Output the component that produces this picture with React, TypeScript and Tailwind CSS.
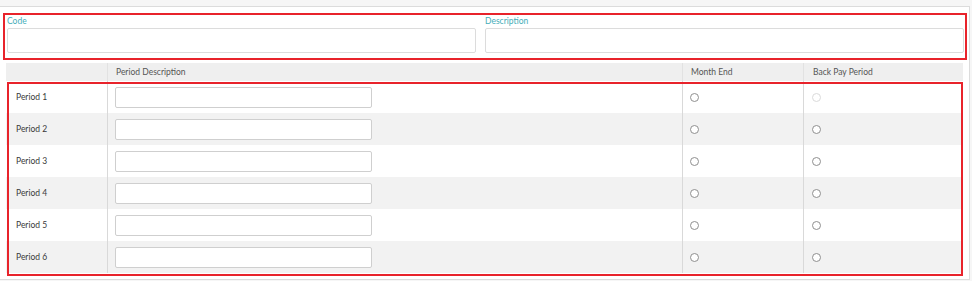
import React from "react";

const font = { fontFamily: "Lato, 'Open Sans', sans-serif" };

function Radio({ disabled }: { disabled?: boolean }) {
  return (
    <span
      className={
        "block w-[9px] h-[9px] rounded-full border bg-white " +
        (disabled ? "border-[#dadada]" : "border-[#8f8f8f]")
      }
    />
  );
}

export default function App() {
  const rows = [1, 2, 3, 4, 5, 6];
  return (
    <div className="w-[972px] h-[281px] bg-[#f6f6f6] pt-[6px] overflow-hidden" style={font}>
      <div className="ml-[-1px] w-[971px] h-[274px] border border-[#dcdcdc] bg-white pt-[6px] pl-[3px]">
        <div className="w-[964px] h-[47px] border-2 border-[#e8232b] pl-[2px] pt-[1px] flex gap-[9px]">
          <div className="w-[469px] flex flex-col">
            <div className="h-[11px] text-[8.5px] leading-[11px] text-[#45adb9]">Code</div>
            <div className="mt-[1px] h-[25px] border border-[#dcdcdc] rounded-[2px] bg-white" />
          </div>
          <div className="w-[479px] flex flex-col">
            <div className="h-[11px] text-[8.5px] leading-[11px] text-[#45adb9]">Description</div>
            <div className="mt-[1px] h-[25px] border border-[#dcdcdc] rounded-[2px] bg-white" />
          </div>
        </div>
        <div className="mt-[3px] ml-[3px] w-[957px] text-[8.5px] text-[#3a3a3a]">
          <div className="h-[18px] bg-[#efefef] flex items-center text-[#555]">
            <div className="w-[101px] h-full" />
            <div className="w-[575px] h-full border-l border-[#e2e2e2] pl-[8px] flex items-center">Period Description</div>
            <div className="w-[121px] h-full border-l border-[#e2e2e2] pl-[8px] flex items-center">Month End</div>
            <div className="w-[160px] h-full border-l border-[#e2e2e2] pl-[9px] flex items-center">Back Pay Period</div>
          </div>
          <div className="relative">
            {rows.map((n) => (
              <div
                key={n}
                className={"h-[32px] flex " + (n % 2 === 0 ? "bg-[#f2f2f2]" : "bg-white")}
              >
                <div className="w-[101px] h-full pl-[10px] flex items-center">Period {n}</div>
                <div className="w-[575px] h-full border-l border-[#d9d9d9] pl-[7px] flex items-center">
                  <div className="w-[257px] h-[21px] border border-[#cfcfcf] rounded-[2px] bg-white" />
                </div>
                <div className="w-[121px] h-full border-l border-[#d9d9d9] pl-[7px] flex items-center">
                  <Radio />
                </div>
                <div className="w-[160px] h-full border-l border-[#d9d9d9] pl-[8px] flex items-center">
                  <Radio disabled={n === 1} />
                </div>
              </div>
            ))}
            <div className="absolute top-[1px] left-[1px] right-0 bottom-[-3px] border-2 border-[#e8232b] pointer-events-none" />
          </div>
        </div>
      </div>
    </div>
  );
}
